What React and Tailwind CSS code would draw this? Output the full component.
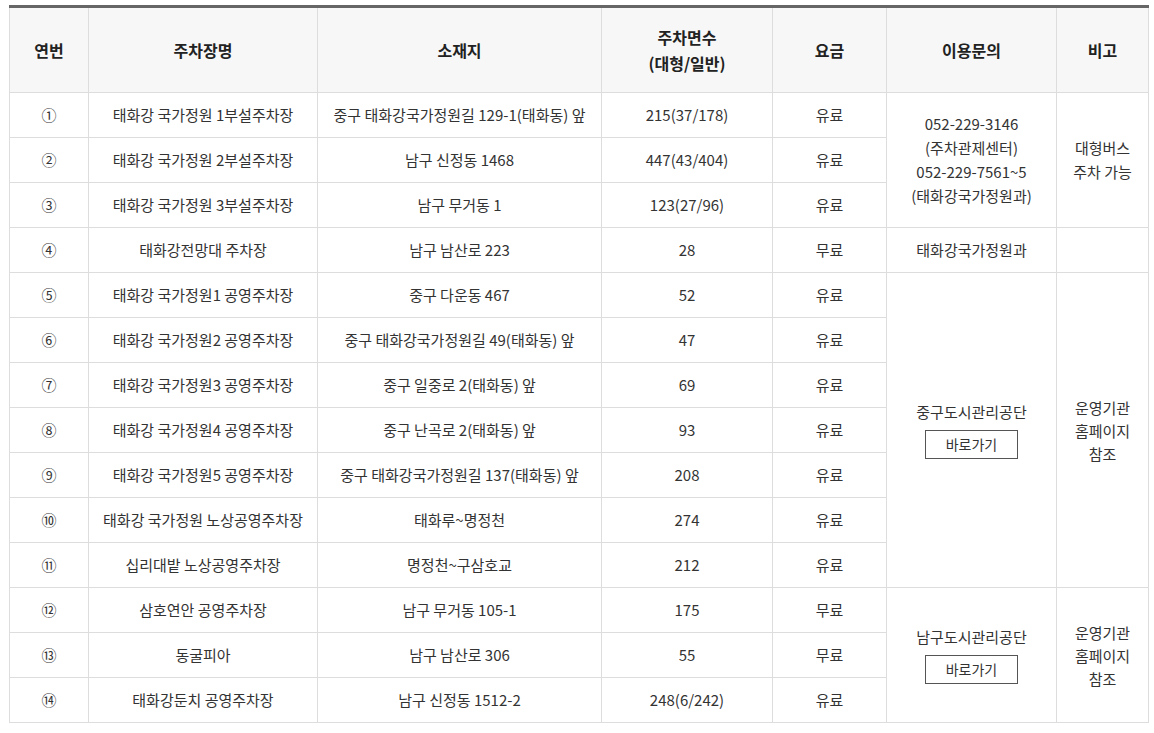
import React from "react";

const rows = [
  { no: "①", name: "태화강 국가정원 1부설주차장", addr: "중구 태화강국가정원길 129-1(태화동) 앞", cnt: "215(37/178)", fee: "유료" },
  { no: "②", name: "태화강 국가정원 2부설주차장", addr: "남구 신정동 1468", cnt: "447(43/404)", fee: "유료" },
  { no: "③", name: "태화강 국가정원 3부설주차장", addr: "남구 무거동 1", cnt: "123(27/96)", fee: "유료" },
  { no: "④", name: "태화강전망대 주차장", addr: "남구 남산로 223", cnt: "28", fee: "무료" },
  { no: "⑤", name: "태화강 국가정원1 공영주차장", addr: "중구 다운동 467", cnt: "52", fee: "유료" },
  { no: "⑥", name: "태화강 국가정원2 공영주차장", addr: "중구 태화강국가정원길 49(태화동) 앞", cnt: "47", fee: "유료" },
  { no: "⑦", name: "태화강 국가정원3 공영주차장", addr: "중구 일중로 2(태화동) 앞", cnt: "69", fee: "유료" },
  { no: "⑧", name: "태화강 국가정원4 공영주차장", addr: "중구 난곡로 2(태화동) 앞", cnt: "93", fee: "유료" },
  { no: "⑨", name: "태화강 국가정원5 공영주차장", addr: "중구 태화강국가정원길 137(태화동) 앞", cnt: "208", fee: "유료" },
  { no: "⑩", name: "태화강 국가정원 노상공영주차장", addr: "태화루~명정천", cnt: "274", fee: "유료" },
  { no: "⑪", name: "십리대밭 노상공영주차장", addr: "명정천~구삼호교", cnt: "212", fee: "유료" },
  { no: "⑫", name: "삼호연안 공영주차장", addr: "남구 무거동 105-1", cnt: "175", fee: "무료" },
  { no: "⑬", name: "동굴피아", addr: "남구 남산로 306", cnt: "55", fee: "무료" },
  { no: "⑭", name: "태화강둔치 공영주차장", addr: "남구 신정동 1512-2", cnt: "248(6/242)", fee: "유료" },
];

const td = "border border-[#dddddd] h-[45px] text-center align-middle p-0";

function Link() {
  return (
    <button className="mt-[7px] inline-flex h-[29px] w-[93px] items-center justify-center border border-[#555555] bg-white text-[14px] text-[#333333]">
      바로가기
    </button>
  );
}

function Note() {
  return (
    <div className="leading-[23px]">
      운영기관
      <br />
      홈페이지
      <br />
      참조
    </div>
  );
}

function extra(i) {
  if (i === 0)
    return (
      <>
        <td rowSpan={3} className={td}>
          <div className="leading-[24px]">
            052-229-3146
            <br />
            (주차관제센터)
            <br />
            052-229-7561~5
            <br />
            (태화강국가정원과)
          </div>
        </td>
        <td rowSpan={3} className={td}>
          <div className="leading-[24px]">
            대형버스
            <br />
            주차 가능
          </div>
        </td>
      </>
    );
  if (i === 3)
    return (
      <>
        <td className={td}>태화강국가정원과</td>
        <td className={td}></td>
      </>
    );
  if (i === 4)
    return (
      <>
        <td rowSpan={7} className={td}>
          <div>중구도시관리공단</div>
          <Link />
        </td>
        <td rowSpan={7} className={td}>
          <Note />
        </td>
      </>
    );
  if (i === 11)
    return (
      <>
        <td rowSpan={3} className={td}>
          <div>남구도시관리공단</div>
          <Link />
        </td>
        <td rowSpan={3} className={td}>
          <Note />
        </td>
      </>
    );
  return null;
}

export default function App() {
  return (
    <div
      className="min-h-screen bg-white pl-[9px] pr-[6px] pt-[5px] text-[#333333]"
      style={{ fontFamily: '"Noto Sans CJK KR", "Noto Sans", sans-serif' }}
    >
      <table className="w-[1139px] table-fixed border-collapse border-t-[3px] border-t-[#666666] text-[15px]">
        <colgroup>
          <col className="w-[79px]" />
          <col className="w-[229px]" />
          <col className="w-[284px]" />
          <col className="w-[171px]" />
          <col className="w-[114px]" />
          <col className="w-[170px]" />
          <col className="w-[92px]" />
        </colgroup>
        <thead>
          <tr className="bg-[#f7f7f7] text-[16px] font-bold text-[#222222]">
            <th className="h-[86px] border border-[#dddddd] border-t-[#666666]">연번</th>
            <th className="border border-[#dddddd] border-t-[#666666]">주차장명</th>
            <th className="border border-[#dddddd] border-t-[#666666]">소재지</th>
            <th className="border border-[#dddddd] border-t-[#666666] leading-[26px]">
              주차면수
              <br />
              (대형/일반)
            </th>
            <th className="border border-[#dddddd] border-t-[#666666]">요금</th>
            <th className="border border-[#dddddd] border-t-[#666666]">이용문의</th>
            <th className="border border-[#dddddd] border-t-[#666666]">비고</th>
          </tr>
        </thead>
        <tbody>
          {rows.map((r, i) => (
            <tr key={r.no}>
              <td className={td}>{r.no}</td>
              <td className={td}>{r.name}</td>
              <td className={td}>{r.addr}</td>
              <td className={td}>{r.cnt}</td>
              <td className={td}>{r.fee}</td>
              {extra(i)}
            </tr>
          ))}
        </tbody>
      </table>
    </div>
  );
}
